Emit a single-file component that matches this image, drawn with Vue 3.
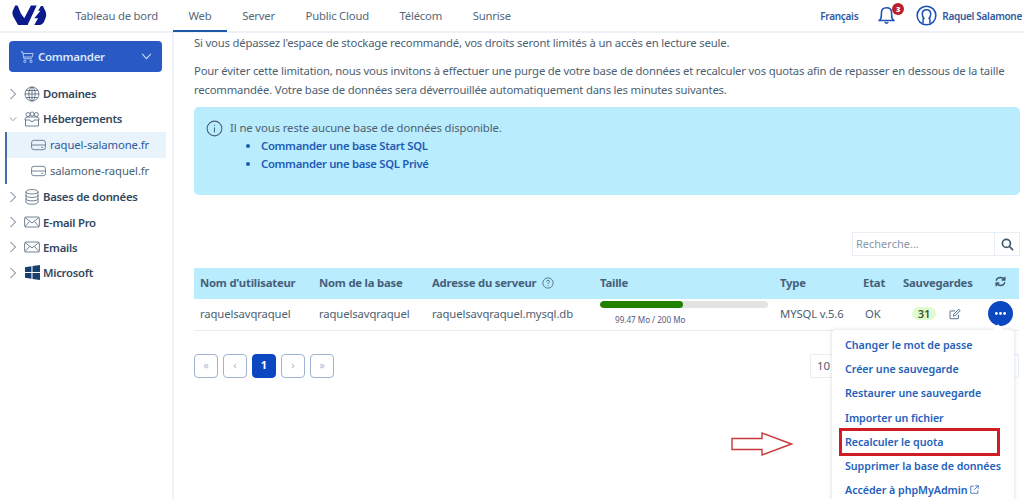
<script setup>
const tabs = ['Tableau de bord', 'Web', 'Server', 'Public Cloud', 'Télécom', 'Sunrise']
const actions = ['Changer le mot de passe', 'Créer une sauvegarde', 'Restaurer une sauvegarde', 'Importer un fichier', 'Recalculer le quota', 'Supprimer la base de données']
const pages = ['«', '‹', '1', '›', '»']
</script>

<template>
  <div class="page">
    <header class="topbar">
      <svg class="logo" viewBox="0 0 36 22" width="35" height="21">
        <path d="M3 0.5 L0.5 6 Q-0.5 9 1 12 L6 21 H16 L25.5 0.5 H19.5 L12.5 14 L9 9 L5.5 0.5 Z" fill="#0b1a8c"/>
        <path d="M30 1 L27 6 H29.5 L23 14 H27 L23 21 H27 Q31 21 33 18 L35 13 Q36 10 35 7 L32 1 Z" fill="#0b1a8c"/>
      </svg>
      <nav class="tabs">
        <a v-for="t in tabs" :key="t" class="tab" :class="{ on: t === 'Web' }">{{ t }}</a>
      </nav>
      <div class="user">
        <span class="lang">Français</span>
        <span class="bell">
          <svg viewBox="0 0 20 22" width="17" height="19" fill="none" stroke="#1b50b4" stroke-width="1.8">
            <path d="M1.5 17 Q4 15 4 10 V8 Q4 2 10 2 Q16 2 16 8 V10 Q16 15 18.5 17 Z"/>
            <path d="M8 18.5 Q10 21.5 12 18.5" />
          </svg>
          <b class="count">3</b>
        </span>
        <svg class="avatar" viewBox="0 0 22 22" width="21" height="21" fill="none" stroke="#1b50b4" stroke-width="1.6">
          <circle cx="11" cy="11" r="9.8"/>
          <path d="M7.4 19 V15.5 Q7.4 14.5 8.2 14 Q6.6 12.5 6.6 9.5 Q6.6 5 11 5 Q15.4 5 15.4 9.5 Q15.4 12.5 13.8 14 Q14.6 14.5 14.6 15.5 V19"/>
        </svg>
        <span class="name">Raquel Salamone</span>
      </div>
    </header>

    <div class="body">
      <aside class="side">
        <button class="order">
          <svg viewBox="0 0 16 16" width="14" height="14" fill="none" stroke="#b9cdf0" stroke-width="1.1">
            <path d="M1 2 H3 L4.5 10 H13.5 M3.4 4 H15 L14 8 H4.2"/>
            <circle cx="5.5" cy="13" r="1.3"/><circle cx="12.5" cy="13" r="1.3"/>
          </svg>
          <span class="order-label">Commander</span>
          <svg viewBox="0 0 12 8" width="11" height="7" fill="none" stroke="#cfdcf5" stroke-width="1.2"><path d="M1 1 L6 6.5 L11 1"/></svg>
        </button>

        <ul class="tree">
          <li class="node">
            <svg class="chev" viewBox="0 0 8 12"><path d="M1.5 1 L6.5 6 L1.5 11"/></svg>
            <svg class="ico" viewBox="0 0 16 16"><circle cx="8" cy="8" r="7"/><ellipse cx="8" cy="8" rx="3.2" ry="7"/><path d="M8 1 V15 M1 8 H15 M2 4.5 H14 M2 11.5 H14"/></svg>
            <b>Domaines</b>
          </li>
          <li class="node">
            <svg class="chev" viewBox="0 0 12 8"><path d="M1 1.5 L6 6.5 L11 1.5"/></svg>
            <svg class="ico" viewBox="0 0 16 16"><circle cx="4" cy="3.5" r="2"/><circle cx="8.2" cy="3" r="2"/><circle cx="12.4" cy="3.5" r="2"/><path d="M1 8 Q1 6 4 6 H12 Q15 6 15 8 V9 H10 L9 10.5 H7 L6 9 H1 Z M1.5 9 V15 H14.5 V9"/></svg>
            <b>Hébergements</b>
          </li>
          <li class="subs">
            <div class="sub active">
              <svg class="disk" viewBox="0 0 16 12"><rect x="0.6" y="1" width="14.8" height="10" rx="2.5"/><path d="M0.6 6 H15.4 M11 8.5 H13"/></svg>
              <span>raquel-salamone.fr</span>
            </div>
            <div class="sub">
              <svg class="disk" viewBox="0 0 16 12"><rect x="0.6" y="1" width="14.8" height="10" rx="2.5"/><path d="M0.6 6 H15.4 M11 8.5 H13"/></svg>
              <span>salamone-raquel.fr</span>
            </div>
          </li>
          <li class="node">
            <svg class="chev" viewBox="0 0 8 12"><path d="M1.5 1 L6.5 6 L1.5 11"/></svg>
            <svg class="ico" viewBox="0 0 16 16"><ellipse cx="8" cy="2.8" rx="6" ry="2.2"/><path d="M2 2.8 V13 Q2 15.2 8 15.2 Q14 15.2 14 13 V2.8 M2 6.2 Q2 8.4 8 8.4 Q14 8.4 14 6.2 M2 9.6 Q2 11.8 8 11.8 Q14 11.8 14 9.6"/></svg>
            <b>Bases de données</b>
          </li>
          <li class="node">
            <svg class="chev" viewBox="0 0 8 12"><path d="M1.5 1 L6.5 6 L1.5 11"/></svg>
            <svg class="ico" viewBox="0 0 16 12"><rect x="0.6" y="1" width="14.8" height="10" rx="1.5"/><path d="M1 1.5 L8 7 L15 1.5 M1 10.5 L5.5 5.5 M15 10.5 L10.5 5.5"/></svg>
            <b>E-mail Pro</b>
          </li>
          <li class="node">
            <svg class="chev" viewBox="0 0 8 12"><path d="M1.5 1 L6.5 6 L1.5 11"/></svg>
            <svg class="ico" viewBox="0 0 16 12"><rect x="0.6" y="1" width="14.8" height="10" rx="1.5"/><path d="M1 1.5 L8 7 L15 1.5 M1 10.5 L5.5 5.5 M15 10.5 L10.5 5.5"/></svg>
            <b>Emails</b>
          </li>
          <li class="node">
            <svg class="chev" viewBox="0 0 8 12"><path d="M1.5 1 L6.5 6 L1.5 11"/></svg>
            <svg class="ico win" viewBox="0 0 14 14"><path d="M0 2.2 L6 1.2 V6.5 H0 Z M7 1 L14 0 V6.5 H7 Z M0 7.5 H6 V12.8 L0 11.8 Z M7 7.5 H14 V14 L7 13 Z"/></svg>
            <b>Microsoft</b>
          </li>
        </ul>
      </aside>

      <main class="main">
        <p class="line first">Si vous dépassez l'espace de stockage recommandé, vos droits seront limités à un accès en lecture seule.</p>
        <p class="line para">Pour éviter cette limitation, nous vous invitons à effectuer une purge de votre base de données et recalculer vos quotas afin de repasser en dessous de la taille recommandée. Votre base de données sera déverrouillée automatiquement dans les minutes suivantes.</p>

        <section class="info">
          <svg viewBox="0 0 18 18" width="17" height="17" fill="none" stroke="#4a5f75" stroke-width="1.1">
            <circle cx="9" cy="9" r="7.8"/><path d="M9 8 V13 M9 5 V6.2"/>
          </svg>
          <div>
            <div class="info-title">Il ne vous reste aucune base de données disponible.</div>
            <ul class="info-list">
              <li>Commander une base Start SQL</li>
              <li>Commander une base SQL Privé</li>
            </ul>
          </div>
        </section>

        <div class="search">
          <span class="search-field">Recherche...</span>
          <span class="search-btn">
            <svg viewBox="0 0 14 14" width="13" height="13" fill="none" stroke="#3f5870" stroke-width="1.8"><circle cx="5.8" cy="5.8" r="4.3"/><path d="M9 9 L13 13"/></svg>
          </span>
        </div>

        <table class="grid">
          <thead>
            <tr>
              <th class="c1">Nom d'utilisateur</th>
              <th class="c2">Nom de la base</th>
              <th class="c3">Adresse du serveur
                <svg class="help" viewBox="0 0 14 14" width="12" height="12" fill="none" stroke="#4f6a84" stroke-width="1"><circle cx="7" cy="7" r="6"/><path d="M5.2 5.4 Q5.4 3.8 7 3.8 Q8.8 3.8 8.8 5.3 Q8.8 6.3 7 7.2 V8.2 M7 9.6 V10.6"/></svg>
              </th>
              <th class="c4">Taille</th>
              <th class="c5">Type</th>
              <th class="c6">Etat</th>
              <th class="c7">Sauvegardes</th>
              <th class="c8">
                <svg viewBox="0 0 14 14" width="11" height="11" fill="none" stroke="#3f5870" stroke-width="1.8"><path d="M1.5 6 Q2.5 2 7 2 Q10 2 12 4.5 M12.5 1 V5 H8.5 M12.5 8 Q11.5 12 7 12 Q4 12 2 9.5 M1.5 13 V9 H5.5"/></svg>
              </th>
            </tr>
          </thead>
          <tbody>
            <tr>
              <td>raquelsavqraquel</td>
              <td>raquelsavqraquel</td>
              <td>raquelsavqraquel.mysql.db</td>
              <td class="size">
                <div class="bar"><div class="fill" :style="{ width: '49.7%' }"></div></div>
                <div class="size-label">99.47 Mo / 200 Mo</div>
              </td>
              <td>MYSQL v.5.6</td>
              <td class="ok">OK</td>
              <td class="saves">
                <span class="pill">31</span>
                <svg viewBox="0 0 14 14" width="12" height="12" fill="none" stroke="#4f6a84" stroke-width="1.1"><path d="M11 8 V12 Q11 12.5 10.5 12.5 H1.8 Q1.2 12.5 1.2 12 V4 Q1.2 3.4 1.8 3.4 H7"/><path d="M5 9.5 L5.5 7.3 L11.5 1.5 L13 3 L7.2 9 Z"/></svg>
              </td>
              <td class="more-cell">
                <button class="more">
                  <svg viewBox="0 0 11 3" width="11" height="3" fill="#fff"><circle cx="1.4" cy="1.5" r="1.4"/><circle cx="5.5" cy="1.5" r="1.4"/><circle cx="9.6" cy="1.5" r="1.4"/></svg>
                </button>
              </td>
            </tr>
          </tbody>
        </table>

        <div class="foot">
          <nav class="pager">
            <span v-for="p in pages" :key="p" class="pg" :class="{ cur: p === '1' }">{{ p }}</span>
          </nav>
          <span class="size-select">10</span>
        </div>

        <div class="menu">
          <a v-for="a in actions" :key="a" class="menu-item">{{ a }}</a>
          <a class="menu-item">Accéder à phpMyAdmin
            <svg viewBox="0 0 12 12" width="9" height="9" fill="none" stroke="#1f5bb5" stroke-width="1"><path d="M5 1.5 H1 V11 H10.5 V7 M7 1 H11 V5 M11 1 L5.5 6.5"/></svg>
          </a>
        </div>
        <div class="mark"></div>
        <svg class="arrow" viewBox="0 0 62 24" width="62" height="24" fill="#fff" stroke="#c8373a" stroke-width="1.4"><path d="M1 6.5 H31 V1 L60.5 12 L31 23 V17.5 H1 Z"/></svg>
      </main>
    </div>
  </div>
</template>

<style>
html, body { margin: 0; background: #fff; }
</style>

<style scoped>
* { box-sizing: border-box; }
.page {
  width: 1024px; height: 499px; overflow: hidden; display: flex; flex-direction: column;
  font-family: "Noto Sans", "Open Sans", sans-serif; font-size: 11.5px; color: #4d5f72; background: #fff;
}
.topbar {
  height: 33px; flex: none; display: flex; align-items: center; padding-left: 12px;
  border-bottom: 2px solid #eef1f8; position: relative;
}
.logo { flex: none; margin-top: -1px; }
.tabs { display: flex; margin-left: 13px; height: 33px; }
.tab { padding: 0 15.3px; line-height: 34px; font-size: 11.3px; letter-spacing: -0.2px; color: #56687a; position: relative; height: 33px; white-space: nowrap; }
.tab.on::after { content: ""; position: absolute; left: 0; right: 0; bottom: 0; height: 2px; background: #1c5aa8; }
.user { margin-left: auto; display: flex; align-items: center; padding-right: 2px; color: #2f5a9e; font-weight: 600; font-size: 10px; letter-spacing: -0.3px; }
.lang { margin-right: 20px; }
.bell { position: relative; display: flex; margin-right: 21px; }
.count {
  position: absolute; right: -9px; top: -3px; width: 12px; height: 12px; border-radius: 50%;
  background: #bb1f2c; color: #fff; font-size: 7.5px; line-height: 12px; text-align: center; letter-spacing: 0;
}
.avatar { margin-right: 5px; }
.body { flex: 1; display: flex; min-height: 0; }
.side { width: 174px; flex: none; border-right: 2px solid #f0f2f8; padding: 8px 0 0 0; }
.order {
  margin-left: 9px; width: 153px; height: 31px; border: 0; border-radius: 4px; background: #2859c5; color: #dce6f8;
  display: flex; align-items: center; padding: 0 10px 0 11px; font: 600 11.5px "Noto Sans", sans-serif; letter-spacing: -0.3px;
}
.order-label { margin-left: 4px; flex: 1; text-align: left; }
.tree { list-style: none; margin: 9px 0 0 0; padding: 0; }
.node { height: 25.3px; display: flex; align-items: center; padding-left: 9px; color: #33485e; font-size: 11.3px; white-space: nowrap; }
.node b { font-weight: 600; margin-left: 3px; letter-spacing: -0.25px; }
.chev { width: 8px; height: 12px; fill: none; stroke: #5d6f82; stroke-width: 1; margin-right: 7px; flex: none; }
.ico { width: 16px; height: 16px; fill: none; stroke: #4d6176; stroke-width: 0.8; flex: none; }
.ico.win { fill: #17406e; stroke: none; width: 15px; height: 15px; margin-left: 1px; }
.subs { margin-left: 5px; border-left: 2px solid #4a6da7; list-style: none; height: 52.5px; }
.sub { height: 26px; width: 159px; display: flex; align-items: center; padding-left: 24px; font-size: 11.3px; letter-spacing: -0.1px; color: #4d5f72; white-space: nowrap; }
.sub.active { background: #e8f3fb; color: #2c5a9f; }
.disk { width: 15px; height: 12px; fill: none; stroke: #5d7086; stroke-width: 0.9; margin-right: 4px; flex: none; }
.main { flex: 1; position: relative; padding: 0 4px 0 20px; min-width: 0; }
.line { margin: 0; font-size: 11.3px; line-height: 19px; color: #4d5f72; letter-spacing: -0.185px; }
.first { margin-top: 0; }
.para { margin-top: 9px; }
.info {
  margin-top: 8px; height: 88px; width: 826px; border-radius: 5px; background: #b9ecfd; display: flex; gap: 7px;
  padding: 13px 0 0 12px; font-size: 11.3px;
}
.info-title { line-height: 16px; letter-spacing: -0.1px; }
.info-list { margin: 1px 0 0; padding-left: 31px; color: #1f5bb5; font-weight: 600; line-height: 18px; letter-spacing: -0.3px; }
.search { margin: 37px 0 0 auto; width: 168px; height: 24px; display: flex; border: 1px solid #e9eef4; }
.search-field { flex: 1; padding-left: 3px; line-height: 22px; color: #8a97a5; font-size: 11px; }
.search-btn { width: 25px; border-left: 1px solid #e9eef4; display: flex; align-items: center; justify-content: center; }
.grid { margin-top: 12px; width: 825px; border-collapse: collapse; table-layout: fixed; }
.grid th { height: 31px; background: #b9ecfd; text-align: left; padding: 0 0 2px 6px; font-weight: 700; font-size: 11.3px; letter-spacing: -0.2px; color: #46607b; white-space: nowrap; }
.grid td { height: 31px; padding: 0 0 2px 6px; border-bottom: 1px solid #e6edf3; white-space: nowrap; font-size: 11.3px; letter-spacing: -0.12px; }
.c1 { width: 119px; } .c2 { width: 113px; } .c3 { width: 168px; } .c4 { width: 180px; }
.c5 { width: 83px; } .c6 { width: 40px; } .c7 { width: 87px; } .c8 { width: 35px; }
.grid th.c8 { padding-left: 11px; }
.help { vertical-align: -2px; margin-left: 3px; }
.grid td.size { vertical-align: top; padding-top: 2px; padding-bottom: 0; }
.bar { width: 168px; height: 7px; border-radius: 4px; background: #e3e3e3; overflow: hidden; }
.fill { height: 100%; background: #218200; border-radius: 4px; }
.size-label { width: 168px; padding-left: 15px; font-size: 8.2px; line-height: 14px; margin-top: 5px; color: #5a5a80; letter-spacing: -0.05px; }
.grid td.ok { padding-left: 8px; }
.grid td.saves { padding-left: 15px; }
.pill { display: inline-block; width: 24px; height: 13px; line-height: 13px; border-radius: 7px; background: #e2fad0; text-align: center; margin-right: 13px; font-weight: 600; color: #3c5a30; }
.saves svg { vertical-align: -2px; }
.grid td.more-cell { position: relative; padding-left: 4px; padding-bottom: 1px; }
.more { width: 25px; height: 25px; border: 0; padding: 0; border-radius: 50%; background: #0b47c0; display: flex; align-items: center; justify-content: center; }
.foot { margin-top: 23px; display: flex; justify-content: space-between; width: 825px; }
.pager { display: flex; gap: 5px; }
.pg { width: 24px; height: 24px; border: 1.5px solid #9fb4d0; border-radius: 4px; text-align: center; line-height: 20px; color: #a7bcd8; font-size: 11px; }
.pg.cur { background: #0b47c0; border-color: #0b47c0; color: #fff; font-weight: 700; }
.size-select { width: 209px; height: 24px; border: 1px solid #e9eef4; padding-left: 6px; line-height: 22px; }
.menu {
  position: absolute; left: 658px; top: 297px; width: 182px; height: 181px; background: #fff; border-radius: 3px;
  box-shadow: 0 0 4px rgba(120, 140, 170, .35); padding: 3px 0 0 13px; color: #2561bb; font-weight: 600; font-size: 10.7px; letter-spacing: -0.05px;
}
.menu::before { content: ""; position: absolute; right: 12px; top: -4px; width: 8px; height: 8px; background: #fff; transform: rotate(45deg); }
.menu-item { display: block; height: 24.2px; line-height: 24.2px; white-space: nowrap; position: relative; }
.mark { position: absolute; left: 665px; top: 395px; width: 161px; height: 28px; border: 3px solid #d01c25; }
.arrow { position: absolute; left: 557px; top: 399px; }
</style>
